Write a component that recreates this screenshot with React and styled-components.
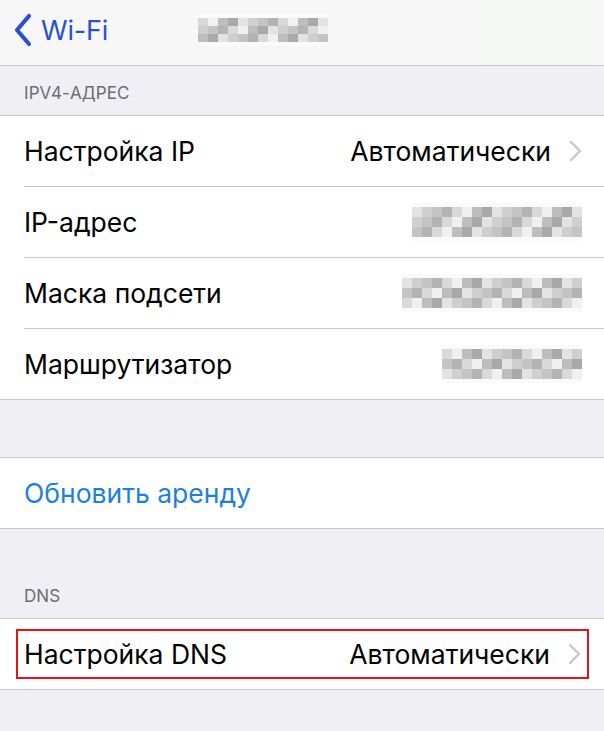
import React from 'react';
import styled, { createGlobalStyle } from 'styled-components';

const GlobalStyle = createGlobalStyle`
  html, body {
    margin: 0;
    padding: 0;
    background: #efeff4;
    font-family: Inter, "Noto Sans", sans-serif;
    -webkit-font-smoothing: antialiased;
  }
`;

const Page = styled.div`
  width: 604px;
  height: 731px;
  overflow: hidden;
  background: #efeff4;
`;

const NavBar = styled.header`
  height: 66px;
  display: flex;
  align-items: center;
  background: linear-gradient(90deg, #f7f7f7 0%, #f7f7f7 75%, #f3f8f3 92%, #f7f7f7 100%);
  border-bottom: 1px solid #c8c7cc;
  box-sizing: border-box;
  padding-left: 13px;
`;

const BackButton = styled.div`
  display: flex;
  align-items: center;
  gap: 8px;
  color: #2a50d2;
  font-size: 27px;
  letter-spacing: -0.2px;
  margin-top: -5px;
`;

const Title = styled.div`
  margin-left: 90px;
  margin-top: -6px;
`;

const SectionHeader = styled.div`
  height: ${({ h }) => h}px;
  box-sizing: border-box;
  display: flex;
  align-items: flex-end;
  padding: 0 0 ${({ pb }) => pb}px 24px;
  color: #6d6d72;
  font-size: 17px;
  letter-spacing: 0.1px;
`;

const Group = styled.section`
  background: #fff;
  border-top: 1px solid #c8c7cc;
  border-bottom: 1px solid #c8c7cc;
`;

const Row = styled.div`
  height: 70px;
  display: flex;
  align-items: center;
  margin-left: 24px;
  padding-right: 22px;
  font-size: 26.5px;
  color: #000;
  & + & {
    border-top: 1px solid #c8c7cc;
  }
`;

const Label = styled.span`
  flex: 1;
  color: ${({ link }) => (link ? '#1d7fe0' : '#000')};
`;

const Value = styled.span`
  color: #000;
  margin-right: 18px;
`;

const HighlightRow = styled.div`
  height: 70px;
  display: flex;
  align-items: center;
`;

const Highlight = styled.div`
  flex: 1;
  border: 2px solid #e8101a;
  margin: 0 15px 0 16px;
  height: 50px;
  box-sizing: border-box;
  display: flex;
  align-items: center;
  padding: 0 6px 0 6px;
  font-size: 26.5px;
`;

const Spacer = styled.div`
  height: ${({ h }) => h}px;
`;

const MosaicGrid = styled.div`
  display: grid;
  grid-template-columns: repeat(${({ cols }) => cols}, ${({ cell }) => cell}px);
  grid-auto-rows: ${({ cellH }) => cellH}px;
  padding: 4px 0;
  background: #fafafa;
`;

const Cell = styled.div`
  background: ${({ tone }) => tone};
`;

const Chevron = () => (
  <svg width="13" height="22" viewBox="0 0 13 22">
    <path d="M2 2 L11 11 L2 20" fill="none" stroke="#c7c7cc" strokeWidth="2.4" strokeLinecap="round" strokeLinejoin="round" />
  </svg>
);

const BackChevron = () => (
  <svg width="20" height="34" viewBox="0 0 20 34">
    <path d="M16 3 L4 17 L16 31" fill="none" stroke="#2a50d2" strokeWidth="4.2" strokeLinecap="round" strokeLinejoin="round" />
  </svg>
);

const tones = ['#e3e3e3', '#cfcfcf', '#bdbdbd', '#a9a9a9', '#d9d9d9', '#f0f0f0', '#c4c4c4', '#b3b3b3'];

// pseudo-random pixelated blur, deterministic by seed
const Mosaic = ({ cols, rows, cell, cellH, seed }) => {
  const cells = [];
  let s = seed;
  for (let i = 0; i < cols * rows; i += 1) {
    s = (s * 9301 + 49297) % 233280;
    cells.push(tones[s % tones.length]);
  }
  return (
    <MosaicGrid cols={cols} cell={cell} cellH={cellH}>
      {cells.map((t, i) => (
        <Cell key={i} tone={t} />
      ))}
    </MosaicGrid>
  );
};

export default function App() {
  return (
    <Page>
      <GlobalStyle />
      <NavBar>
        <BackButton>
          <BackChevron />
          Wi-Fi
        </BackButton>
        <Title>
          <Mosaic cols={13} rows={3} cell={10} cellH={8} seed={7} />
        </Title>
      </NavBar>

      <SectionHeader h={49} pb={12}>IPV4-АДРЕС</SectionHeader>
      <Group>
        <Row>
          <Label>Настройка IP</Label>
          <Value>Автоматически</Value>
          <Chevron />
        </Row>
        <Row>
          <Label>IP-адрес</Label>
          <Mosaic cols={17} rows={3} cell={10} cellH={10} seed={3} />
        </Row>
        <Row>
          <Label>Маска подсети</Label>
          <Mosaic cols={18} rows={3} cell={10} cellH={10} seed={11} />
        </Row>
        <Row>
          <Label>Маршрутизатор</Label>
          <Mosaic cols={14} rows={3} cell={10} cellH={10} seed={23} />
        </Row>
      </Group>

      <Spacer h={57} />
      <Group>
        <Row>
          <Label link>Обновить аренду</Label>
        </Row>
      </Group>

      <SectionHeader h={89} pb={12}>DNS</SectionHeader>
      <Group>
        <HighlightRow>
          <Highlight>
            <Label>Настройка DNS</Label>
            <Value>Автоматически</Value>
            <Chevron />
          </Highlight>
        </HighlightRow>
      </Group>
    </Page>
  );
}
